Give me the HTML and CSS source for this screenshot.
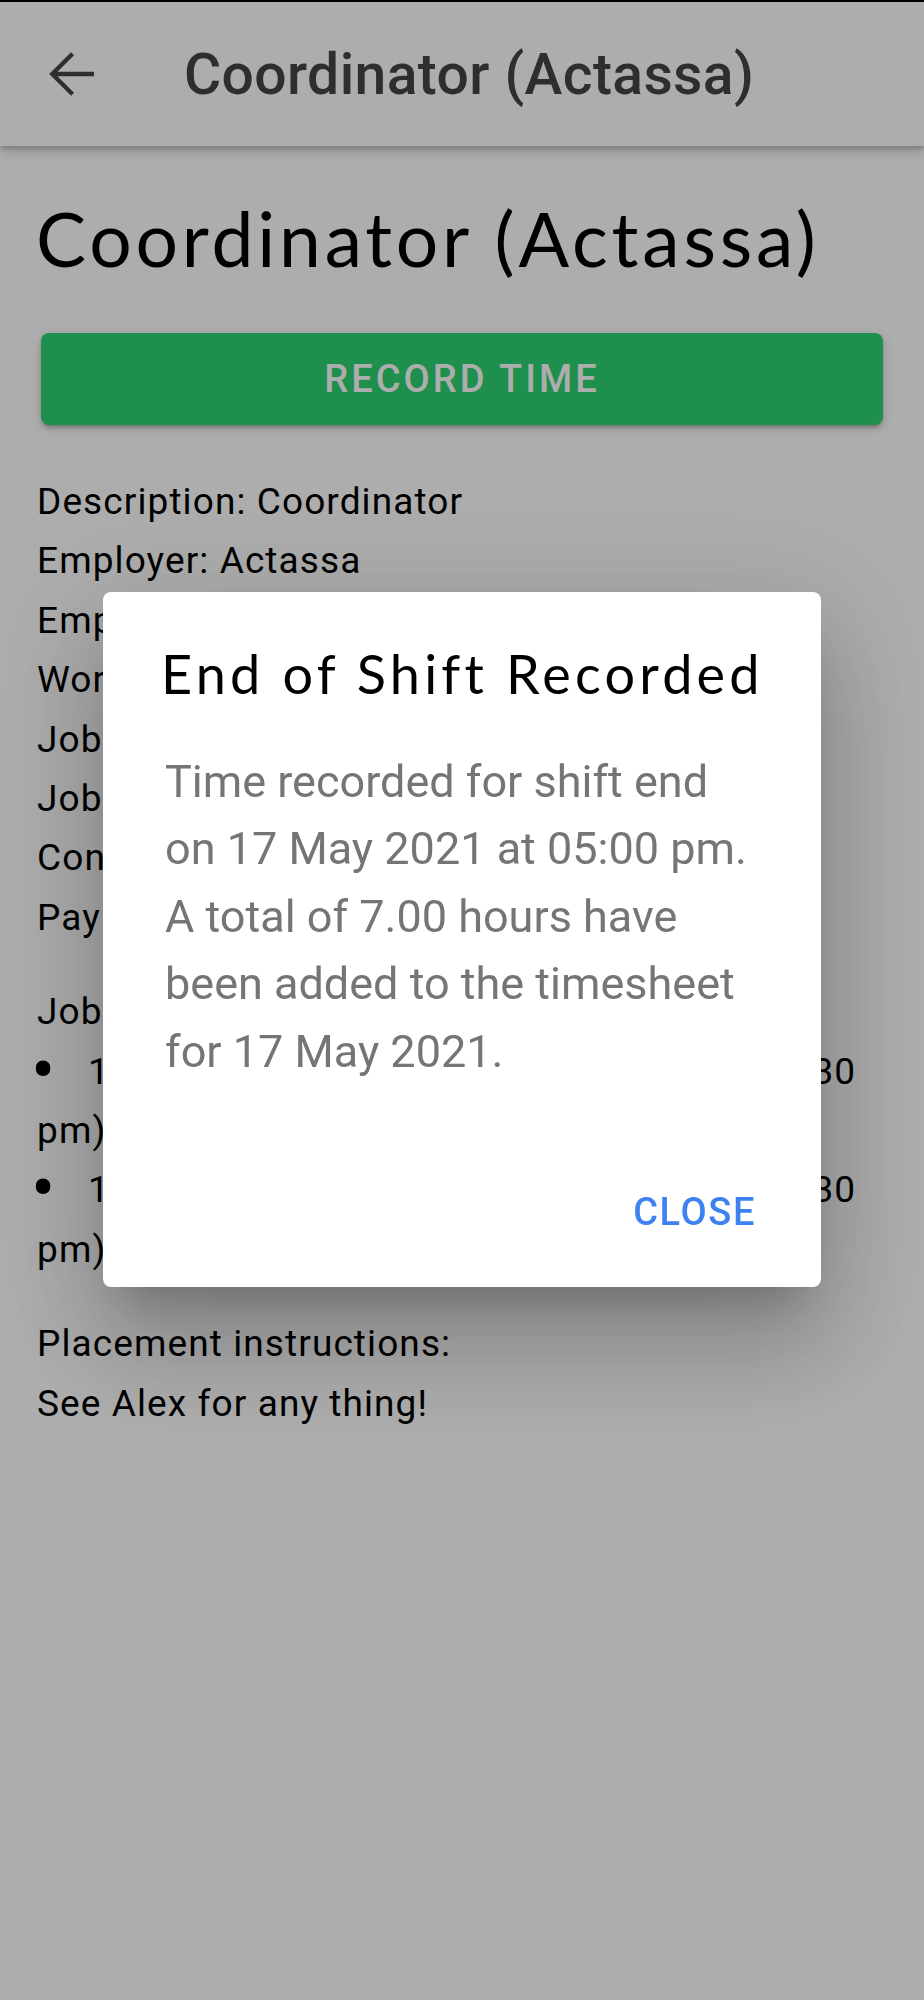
FILE: index.html
```html
<!DOCTYPE html>
<html lang="en">
<head>
<meta charset="utf-8">
<title>Coordinator (Actassa)</title>
<link rel="stylesheet" href="styles.css">
</head>
<body>
<div class="statusline"></div>
<header class="appbar">
  <svg class="back" viewBox="0 0 24 24" aria-hidden="true"><path d="M20 12H5.2M12.2 4.6L4.8 12l7.4 7.4" fill="none" stroke="#444" stroke-width="1.55"/></svg>
  <h1 class="appbar-title">Coordinator (Actassa)</h1>
</header>
<main class="content">
  <h2 class="heading">Coordinator (Actassa)</h2>
  <button class="record" type="button">Record time</button>
  <div class="details">
    <div class="group">
      <div>Description: Coordinator</div>
      <div>Employer: Actassa</div>
      <div>Employment type: Casual</div>
      <div>Work address: 1 Main Street</div>
      <div>Job start date: 17 May 2021</div>
      <div>Job end date: 19 May 2021</div>
      <div>Contact: Alex</div>
      <div>Pay rate: $25.00/hr</div>
    </div>
    <div class="group">
      <div>Job shifts:</div>
      <div><span class="bullet">•</span>17 May 2021 - 19 May 2021 (9:00 am – 5:30 pm)</div>
      <div><span class="bullet">•</span>18 May 2021 - 19 May 2021 (8:30 am – 3:30 pm)</div>
    </div>
    <div class="group">
      <div>Placement instructions:</div>
      <div>See Alex for any thing!</div>
    </div>
  </div>
</main>
<div class="scrim"></div>
<div class="dialog" role="dialog">
  <h3 class="dialog-title">End of Shift Recorded</h3>
  <p class="dialog-body">Time recorded for shift end on 17 May 2021 at 05:00 pm. A total of 7.00 hours have been added to the timesheet for 17 May 2021.</p>
  <div class="dialog-actions">
    <button class="close" type="button">Close</button>
  </div>
</div>
</body>
</html>
```
FILE: styles.css
```css
html, body {
  margin: 0;
  padding: 0;
}
body {
  background: #ffffff;
  font-family: Roboto, "Liberation Sans", sans-serif;
  min-height: 2000px;
}
.statusline {
  height: 2px;
  background: #000;
}
.appbar {
  position: relative;
  z-index: 1;
  height: 144px;
  display: flex;
  align-items: center;
  padding-left: 39px;
  background: #fff;
  box-shadow: 0 3px 5px rgba(0,0,0,0.22), 0 6px 14px rgba(0,0,0,0.12);
}
.back {
  width: 66px;
  height: 66px;
  flex: none;
}
.appbar-title {
  margin: 0 0 0 79px;
  font-size: 57px;
  font-weight: 500;
  letter-spacing: 0.4px;
  color: #444;
  line-height: normal;
}
.content {
  padding: 0 37px;
}
.heading {
  margin: 47px 0 0 -1px;
  font-family: Lato, "Open Sans", sans-serif;
  font-weight: 400;
  font-size: 75px;
  line-height: 90px;
  letter-spacing: 3.8px;
  color: #000;
}
.record {
  display: flex;
  align-items: center;
  justify-content: center;
  width: 842px;
  height: 92px;
  margin: 50px 0 0 4px;
  border: 0;
  border-radius: 8px;
  background: #2dd371;
  color: #fff;
  font-family: Roboto, sans-serif;
  font-weight: 500;
  font-size: 38px;
  letter-spacing: 3px;
  text-transform: uppercase;
  box-shadow: 0 5px 3px -4px rgba(0,0,0,0.2), 0 4px 5px rgba(0,0,0,0.14), 0 2px 12px rgba(0,0,0,0.12);
}
.details {
  margin-top: 47px;
  font-size: 37px;
  line-height: 59.4px;
  letter-spacing: 1.1px;
  color: #000;
}
.group + .group {
  margin-top: 35px;
}
.bullet {
  display: inline-block;
  width: 57px;
  margin-left: -6px;
  font-size: 72px;
  line-height: 0;
  vertical-align: -11px;
}
.scrim {
  position: fixed;
  inset: 0;
  background: rgba(0,0,0,0.32);
  z-index: 5;
}
.dialog {
  position: fixed;
  z-index: 6;
  left: 103px;
  top: 592px;
  width: 718px;
  box-sizing: border-box;
  padding: 50px 62px 53px;
  background: #fff;
  border-radius: 8px;
  box-shadow: 0 30px 40px -19px rgba(0,0,0,0.2), 0 65px 100px 8px rgba(0,0,0,0.14), 0 24px 120px 22px rgba(0,0,0,0.12);
}
.dialog-title {
  margin: 0 0 0 -4px;
  font-family: Lato, "Open Sans", sans-serif;
  font-weight: 400;
  font-size: 54px;
  line-height: 64px;
  letter-spacing: 4.2px;
  white-space: nowrap;
  color: #000;
}
.dialog-body {
  margin: 41.5px 0 0;
  font-size: 45px;
  line-height: 67.5px;
  color: #757575;
}
.dialog-actions {
  display: flex;
  justify-content: flex-end;
  margin-top: 105px;
}
.close {
  border: 0;
  padding: 0;
  margin-right: 3px;
  background: none;
  font-family: Roboto, sans-serif;
  font-weight: 500;
  font-size: 38px;
  line-height: normal;
  letter-spacing: 1.6px;
  text-transform: uppercase;
  color: #3d82f0;
}
```
